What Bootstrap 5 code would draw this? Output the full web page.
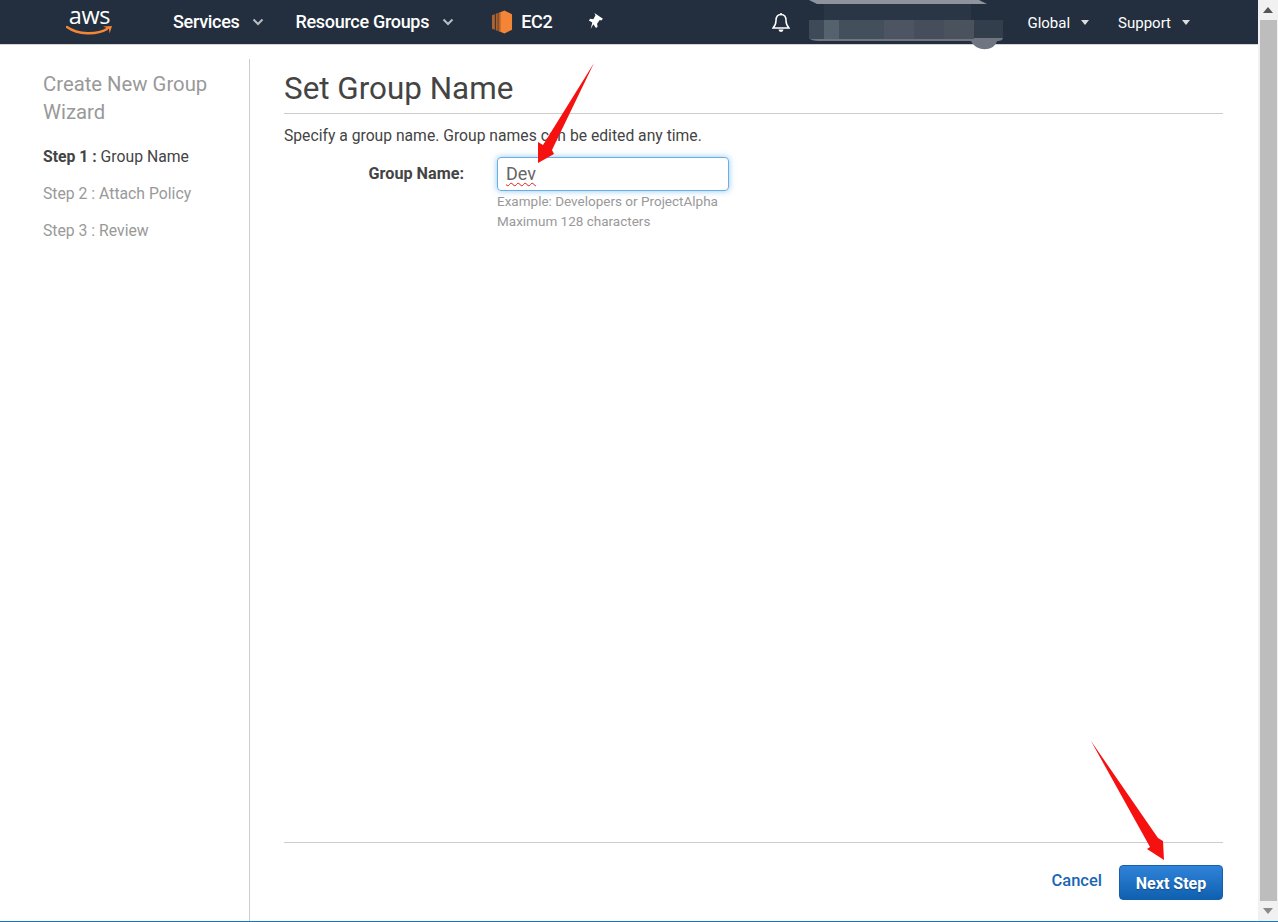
<!DOCTYPE html>
<html lang="en">
<head>
  <meta charset="UTF-8">
  <title>Create New Group Wizard</title>
  <link href="https://cdn.jsdelivr.net/npm/bootstrap@5.3.0/dist/css/bootstrap.min.css" rel="stylesheet" />
  <style>
    html, body { height: 100%; overflow: hidden; }
    body { font-family: Roboto, "Liberation Sans", sans-serif; font-size: 15.7px; color: #444; background: #fff; }
    .shell { width: 1278px; height: 922px; position: relative; border-bottom: 1px solid #1b75bb; }
    .page-col { width: 1258px; }
    .scroll-col { width: 20px; background: #f1f1f1; }
    .scroll-btn { height: 20px; color: #8a8a8a; }
    .scroll-thumb { background: #bdbdbd; margin: 0 1px 0 2px; }
    .topbar { height: 45px; background: #232f3e; color: #fff; border-bottom: 1px solid #d5d5d5; }
    .aws-logo { margin-left: 66px; width: 47px; }
    .aws-word { font-size: 23.5px; line-height: 20px; color: #fff; font-family: "Open Sans", sans-serif; letter-spacing: -.3px; margin-top: -3px; }
    .top-link { font-weight: 500; font-size: 18px; color: #fff; letter-spacing: -.3px; margin-top: -1px; }
    .top-small { font-size: 15px; color: #fff; margin-top: 2px; }
    .svc { margin-left: 60px; }
    .chev { margin-left: 13px; }
    .res { margin-left: 31px; }
    .ec2 { margin-left: 38px; }
    .pin { margin-left: 36px; margin-top: -2px; }
    .bell { margin-left: 168px; margin-top: 1px; }
    .glob { margin-left: 237px; }
    .supp { margin-left: 29px; }
    .tri { width: 0; height: 0; margin-left: 11px; border-left: 4px solid transparent; border-right: 4px solid transparent; border-top: 5px solid #ddd; }
    .side { width: 250px; margin-top: 14px; border-right: 1px solid #ccc; padding: 11px 0 0 43px; }
    .side-title { font-size: 20.3px; line-height: 28px; color: #999; font-weight: 400; margin: 0 0 20px; }
    .side-step { font-size: 15.75px; line-height: 22px; color: #999; margin-bottom: 15px; }
    .side-step.on { color: #444; }
    .side-step b { font-weight: 700; }
    .main-col { padding: 0 35px 21px 34px; }
    .page-head { font-size: 31.4px; font-weight: 400; color: #444; line-height: 38px; padding: 25px 0 5px; margin: 0; border-bottom: 1px solid #ccc; }
    .intro { font-size: 15.7px; line-height: 20px; margin: 12px 0 11px; }
    .name-label { width: 180px; text-align: right; font-weight: 700; font-size: 16.2px; line-height: 22px; margin: 6px 33px 0 0; color: #444; }
    .name-input { width: 232px; height: 34px; border: 1px solid #66afe9; border-radius: 4px; box-shadow: 0 0 6px rgba(102,175,233,.7); padding: 2px 8px; font-size: 18px; color: #666; }
    .dev-text { text-decoration: underline wavy #e02020 1px; text-underline-offset: 2px; text-decoration-skip-ink: none; }
    .hint { font-size: 13.5px; line-height: 20px; color: #999; }
    .foot-line { border-top: 1px solid #ccc; padding-top: 22px; }
    .cancel-link { color: #1b66b3; font-weight: 500; font-size: 16.5px; text-decoration: none; margin-right: 17px; margin-top: -3px; }
    .next-btn { width: 104px; height: 35px; background: linear-gradient(#2f83d8, #1060b0); border: 1px solid #1560ad; color: #fff; font-weight: 700; font-size: 16px; line-height: 35px; border-radius: 4px; padding: 0; text-shadow: 0 1px 1px rgba(0,0,0,.3); }
    .blur-box { position: absolute; left: 809px; top: 0; width: 197px; height: 50px; }
    .arrow-layer { position: absolute; left: 0; top: 0; pointer-events: none; }
  </style>
</head>
<body>

  <div class="shell d-flex">
    <div class="page-col d-flex flex-column">

      <!-- Top bar -->
      <nav class="topbar d-flex align-items-center flex-shrink-0">
        <div class="aws-logo text-center">
          <div class="aws-word">aws</div>
          <svg width="47" height="12" viewBox="0 0 47 12" class="d-block">
            <path d="M1 2C12 10 31 10 41 4" fill="none" stroke="#f58536" stroke-width="2.4" stroke-linecap="round"/>
            <path d="M37 1.500L46 1 43.500 8.500 43 4z" fill="#f58536"/>
          </svg>
        </div>
        <span class="top-link svc">Services</span>
        <svg class="chev" width="12" height="8" viewBox="0 0 12 8"><path d="M1.500 1.500L6 6l4.500-4.500" fill="none" stroke="#b9bdc3" stroke-width="2"/></svg>
        <span class="top-link res">Resource Groups</span>
        <svg class="chev" width="12" height="8" viewBox="0 0 12 8"><path d="M1.500 1.500L6 6l4.500-4.500" fill="none" stroke="#b9bdc3" stroke-width="2"/></svg>
        <svg class="ec2" width="21" height="24" viewBox="0 0 22 24">
          <path d="M7 2.500L13 0l8 4v16l-8 4-6-2.500z" fill="#f58536"/>
          <path d="M0 5l3-1.200v16.400l-3-1.200zM4 3.400l2-.8v18.800l-2-.8zM7 2.200l2-.8v21.200l-2-.8z" fill="#b5622a"/>
        </svg>
        <span class="top-link ms-2">EC2</span>
        <svg class="pin" width="16" height="17" viewBox="0 0 15 16">
          <path d="M6 0l8 5.500-1.500 1.500-1.500-.5L8.500 10l.5 3-1.500 1L5 10.500 2.500 15 4 9 .8 7 2 5.500l3 .3L7 2z" fill="#fff"/>
        </svg>
        <svg class="bell" width="18" height="20" viewBox="0 0 18 20">
          <path d="M9 1.500c-3.500 0-5 2.800-5 6 0 3.500-1 5.500-3 7.500h16c-2-2-3-4-3-7.500 0-3.200-1.500-6-5-6z" fill="none" stroke="#fff" stroke-width="1.500"/>
          <path d="M6.500 16.500a2.500 2.500 0 0 0 5 0z" fill="#fff"/>
          <circle cx="9" cy="1.200" r="1.100" fill="#fff"/>
        </svg>
        <span class="top-small glob">Global</span>
        <span class="tri"></span>
        <span class="top-small supp">Support</span>
        <span class="tri"></span>
      </nav>

      <div class="d-flex flex-grow-1">
        <!-- Wizard steps -->
        <aside class="side flex-shrink-0">
          <h2 class="side-title">Create New Group Wizard</h2>
          <div class="side-step on"><b>Step 1 :</b> Group Name</div>
          <div class="side-step">Step 2 : Attach Policy</div>
          <div class="side-step">Step 3 : Review</div>
        </aside>

        <!-- Step content -->
        <main class="main-col flex-grow-1 d-flex flex-column">
          <h1 class="page-head">Set Group Name</h1>
          <p class="intro">Specify a group name. Group names can be edited any time.</p>
          <div class="d-flex flex-grow-1">
            <label class="name-label flex-shrink-0" for="groupName">Group Name:</label>
            <div>
              <div class="name-input"><span class="dev-text" id="groupName">Dev</span></div>
              <div class="hint">Example: Developers or ProjectAlpha</div>
              <div class="hint">Maximum 128 characters</div>
            </div>
          </div>
          <div class="foot-line d-flex justify-content-end align-items-center">
            <a href="#" class="cancel-link">Cancel</a>
            <button type="button" class="btn next-btn">Next Step</button>
          </div>
        </main>
      </div>
    </div>

    <!-- Scrollbar -->
    <div class="scroll-col d-flex flex-column flex-shrink-0">
      <div class="scroll-btn d-flex align-items-center justify-content-center">
        <svg width="10" height="6" viewBox="0 0 10 6"><path d="M5 0l5 6H0z" fill="#555"/></svg>
      </div>
      <div class="scroll-thumb flex-grow-1"></div>
      <div class="scroll-btn d-flex align-items-center justify-content-center">
        <svg width="10" height="6" viewBox="0 0 10 6"><path d="M0 0h10L5 6z" fill="#8a8a8a"/></svg>
      </div>
    </div>

    <!-- Redacted account name -->
    <svg class="blur-box" viewBox="0 0 197 50">
      <path d="M8 4L0 0h170l8 4z" fill="#8d949d"/>
      <path d="M15 4h147v16H15z" fill="#2a3645"/>
      <path d="M0 20h194v17c0 3-2 4-6 4-3 11-21 11-26 0H10q-8 0-10-3z" fill="#6f7681"/>
      <path d="M0 20h15v19H0z" fill="#3e4a57"/>
      <path d="M15 20h15v19H15z" fill="#53626c"/>
      <path d="M30 20h45v19H30z" fill="#444f5c"/>
      <path d="M75 20h30v19H75z" fill="#4c5561"/>
      <path d="M105 20h30v19h-30z" fill="#464e5b"/>
      <path d="M135 20h30v19h-30z" fill="#4a525e"/>
      <path d="M165 20h29v18h-29z" fill="#323e4c"/>
    </svg>

    <!-- Red annotation arrows -->
    <svg class="arrow-layer" width="1278" height="922" viewBox="0 0 1278 922">
      <path d="M594 63L552 150 554 154 538 163 538 142 543 145z" fill="#f5110f"/>
      <path d="M1091 741L1158 838 1163 841 1164 860 1147 849 1150 847z" fill="#f5110f"/>
    </svg>
  </div>

</body>
</html>
